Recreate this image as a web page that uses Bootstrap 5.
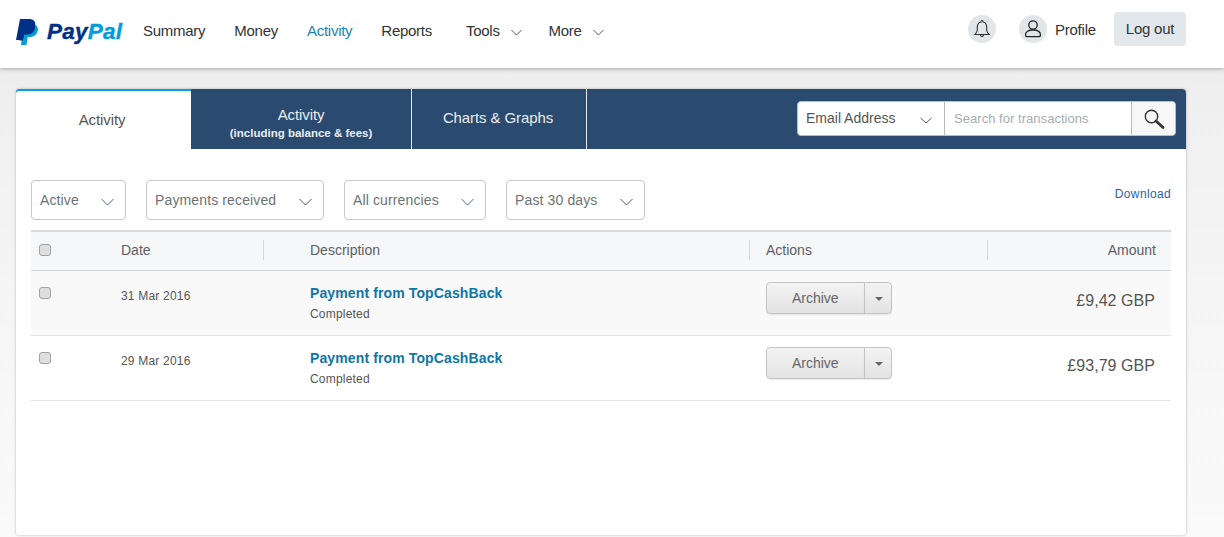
<!DOCTYPE html>
<html lang="en"><head><meta charset="utf-8"><title>PayPal Activity</title>
<link href="https://cdn.jsdelivr.net/npm/bootstrap@5.3.0/dist/css/bootstrap.min.css" rel="stylesheet">
<style>
html,body{height:537px;overflow:hidden}
body{font-family:"Liberation Sans",Arial,sans-serif;background:linear-gradient(#eeeeee 70px,#f3f3f3 200px,#fafafa 537px);color:#444}
.pp-head{height:68px;background:#fff;box-shadow:0 1px 4px rgba(0,0,0,.3);padding:0 38px 0 16px;position:relative}
.pp-logo{width:22px;height:26px;margin-top:-4px}
.pp-word{font-weight:700;font-style:italic;font-size:22.5px;letter-spacing:.25px;margin-left:9px;margin-top:-4px;color:#003087;width:76px;line-height:26px;-webkit-text-stroke:.4px currentColor}
.pp-word span{color:#009cde}
.pp-links{margin-left:20px;gap:29px;font-size:15px;letter-spacing:-.27px;margin-top:-6px}
.pp-links a{color:#333;text-decoration:none;line-height:20px}
.pp-links a.on{color:#1b87b8}
.pp-links a.pp-tools{margin-left:5px}
.pp-links a.pp-more{margin-left:-2px}
.pp-links svg{margin-left:7px}
.pp-circle{width:28px;height:28px;border-radius:50%;background:#e1e6ea}
.pp-right{font-size:15px;letter-spacing:-.2px;color:#333;margin-top:-10px}
.pp-gap{margin-right:23px}
.pp-prof{margin-top:2px}
.pp-logout{width:72px;height:34px;background:#e1e7eb;border-radius:4px;border:0;padding:0;font-size:15px;letter-spacing:-.25px;color:#333;margin-left:18px}
.pp-card{margin:21px 38px 0 16px;height:446px;background:#fff;border-radius:4px 4px 3px 3px;box-shadow:0 0 3px rgba(0,0,0,.28)}
.pp-tabs{height:60px;background:#2b4a6f;border-radius:4px 4px 0 0}
.pp-tab{color:#e8edf2;text-decoration:none;font-size:15px;letter-spacing:-.1px;height:60px;border-right:1px solid #e6e9ee;text-align:center;line-height:1.2}
.pp-tab small{display:block;font-size:11.5px;font-weight:700;letter-spacing:0;margin-top:3px}
.pp-tab.on{width:175px;background:#fff;color:#555;border-top:2px solid #0a9fe0;border-right:0;border-radius:4px 0 0 0;padding-right:3px}
.pp-w2{width:221px;padding-top:9px}.pp-w3{width:175px;padding:0 2px 2px 0}
.pp-search{margin-left:auto;margin-right:10px;width:379px;height:35px;margin-top:-1px;background:#fff;border:1px solid #bbb;border-radius:4px;font-size:14px}
.pp-sel{width:147px;padding-left:8px;color:#555;border-right:1px solid #bbb;padding-right:12px}
.pp-inp{flex:1;min-width:0;border:0;padding:0 9px;font-size:13.1px;outline:0;background:transparent;color:#555;border-right:1px solid #bbb;height:100%}
.pp-inp::placeholder{color:#a8adb2;opacity:1}
.pp-glass{width:43px;height:100%;border:0;background:#f8f8f8;padding:0;border-radius:0 4px 4px 0}
.pp-panel{padding:31px 15px 0}
.pp-filters{gap:20px;height:40px;margin-bottom:10px}
.pp-fil{height:40px;border:1px solid #c9c9c9;border-radius:4px;background:#fff;color:#6c7378;font-size:14px;letter-spacing:.13px;padding:0 11px 0 8px}
.pp-dl{margin-left:auto;font-size:12px;letter-spacing:.35px;color:#2b62a8;text-decoration:none;margin-top:-12px}
.pp-hrow{height:41px;padding-bottom:3px;background:#f6f7f9;border-top:2px solid #dcdcdc;border-bottom:1px solid #cfd6db;font-size:14px;line-height:20px;color:#5c6166}
.pp-row{height:65px;border-bottom:1px solid #e4e4e4;padding-top:11px}
.pp-row.alt{background:#f9f9f9}
.c1{width:90px;padding-left:8px;flex:none}.c2{width:143px;flex:none}.c3{width:486px;flex:none;padding-left:46px}.c4{width:238px;flex:none;padding-left:16px}.c5{flex:1;text-align:right}
.pp-hrow .c2,.pp-hrow .c3,.pp-hrow .c4{height:20px;line-height:20px;border-right:1px solid #d5d8da}
.pp-hrow .c5{padding-right:15px}
.pp-chk.form-check-input{width:12px;height:12px;margin:0;background-color:#dedede;border:1px solid #a3a3a3;border-radius:3px;display:block}
.pp-row .pp-chk{margin-top:5px}
.pp-date{font-size:12px;letter-spacing:.2px;color:#555;padding-top:5px}
.pp-name{font-size:14px;font-weight:700;letter-spacing:.12px;color:#0f76a8;text-decoration:none;line-height:20px;display:block;margin-top:1px}
.pp-st{font-size:12px;letter-spacing:.2px;color:#555;line-height:20px;margin-top:1px}
.pp-split{width:126px;height:32px}
.pp-split .btn{height:32px;border:1px solid #c4c4c4;background:linear-gradient(#f3f3f3,#e3e3e3);color:#666;font-size:14px;padding:0;box-shadow:0 1px 1px rgba(0,0,0,.08)}
.pp-arch{width:98px;border-radius:4px 0 0 4px}
.pp-car{width:28px;margin-left:-1px!important;border-radius:0 4px 4px 0}
.pp-split .pp-car{padding-left:2px}
.pp-tri{display:inline-block;border:4px solid transparent;border-top-color:#666;border-bottom:0;vertical-align:middle}
.pp-amt{font-size:16px;color:#555;padding-right:16px;padding-top:7px;letter-spacing:.05px}
</style></head>
<body>
<header class="pp-head d-flex align-items-center">
  <svg class="pp-logo" viewBox="0 0 22 26" aria-label="PayPal logo">
    <path fill="#009cde" d="M8 5.500h8.500c3.600 0 6 2.200 5.300 6-.8 4.300-4 6.500-7.800 6.500h-2.300l-1.300 8H5z"/>
    <path fill="#012169" d="M5.700 6h9.500c1.500 0 3 .5 4 1.500-.5 5-3.500 8-8 8H8.200l-1.400 6H3.500z"/>
    <path fill="#003087" d="M4 0h9c4.300 0 7 2.600 6.200 7-.9 5-4.600 8.200-9 8.200H7.800L6.500 21H0z"/>
  </svg>
  <div class="pp-word">Pay<span>Pal</span></div>
  <nav class="pp-links d-flex align-items-center">
    <a href="#">Summary</a><a href="#">Money</a><a href="#" class="on">Activity</a><a href="#">Reports</a>
    <a href="#" class="pp-tools">Tools <svg width="11" height="7" viewBox="0 0 11 7"><path d="M.5 1l5 5 5-5" fill="none" stroke="#555"/></svg></a>
    <a href="#" class="pp-more">More <svg width="11" height="7" viewBox="0 0 11 7"><path d="M.5 1l5 5 5-5" fill="none" stroke="#555"/></svg></a>
  </nav>
  <div class="pp-right ms-auto d-flex align-items-center">
    <span class="pp-circle pp-gap d-flex align-items-center justify-content-center">
      <svg width="18" height="20" viewBox="0 0 18 20"><path d="M9 1.500c-.6 0-1 .4-1 1v.5C5.500 3.600 4.300 5.500 4.300 8v3c0 2-1.300 3.500-2.300 4.500h14c-1-1-2.300-2.500-2.300-4.500V8c0-2.500-1.200-4.400-3.700-5v-.5c0-.6-.4-1-1-1zM7.500 15.800c0 1 .7 1.700 1.500 1.700s1.500-.7 1.500-1.700" fill="none" stroke="#333" stroke-width="1.100"/></svg>
    </span>
    <span class="pp-circle d-flex align-items-center justify-content-center ms-0 me-2">
      <svg width="20" height="20" viewBox="0 0 20 20"><circle cx="10" cy="6" r="4.200" fill="none" stroke="#222" stroke-width="1.300"/><path d="M2.500 16c0-3.200 3-5 7.500-5s7.500 1.800 7.500 5c0 1-.7 1.700-2 1.700h-11c-1.300 0-2-.7-2-1.700z" fill="none" stroke="#222" stroke-width="1.300"/></svg>
    </span>
    <span class="pp-prof">Profile</span>
    <button class="pp-logout" type="button">Log out</button>
  </div>
</header>
<main class="pp-card">
  <div class="pp-tabs d-flex align-items-center">
    <a href="#" class="pp-tab on d-flex align-items-center justify-content-center">Activity</a>
    <a href="#" class="pp-tab pp-w2 d-flex flex-column align-items-center justify-content-center">Activity<small>(including balance &amp; fees)</small></a>
    <a href="#" class="pp-tab pp-w3 d-flex align-items-center justify-content-center">Charts &amp; Graphs</a>
    <form class="pp-search d-flex align-items-center" onsubmit="return false">
      <div class="pp-sel d-flex align-items-center justify-content-between h-100">Email Address <svg width="12" height="7" viewBox="0 0 12 7" class="mt-1"><path d="M.5 1l5.500 5 5.500-5" fill="none" stroke="#555"/></svg></div>
      <input class="pp-inp" placeholder="Search for transactions" aria-label="Search">
      <button class="pp-glass" type="button" aria-label="Search"><svg width="22" height="22" viewBox="0 0 22 22"><circle cx="8.500" cy="8.500" r="6.200" fill="none" stroke="#333" stroke-width="1.400"/><path d="M13 13l7 6.500" stroke="#333" stroke-width="2.800" stroke-linecap="round"/></svg></button>
    </form>
  </div>
  <div class="pp-panel">
    <div class="pp-filters d-flex align-items-center">
      <button class="pp-fil btn d-flex align-items-center justify-content-between" style="width:95px" type="button">Active <svg width="13" height="8" viewBox="0 0 13 8" class="mt-1"><path d="M.5 1l6 6 6-6" fill="none" stroke="#4a6a90"/></svg></button>
      <button class="pp-fil btn d-flex align-items-center justify-content-between" style="width:178px" type="button">Payments received <svg width="13" height="8" viewBox="0 0 13 8" class="mt-1"><path d="M.5 1l6 6 6-6" fill="none" stroke="#555"/></svg></button>
      <button class="pp-fil btn d-flex align-items-center justify-content-between" style="width:142px" type="button">All currencies <svg width="13" height="8" viewBox="0 0 13 8" class="mt-1"><path d="M.5 1l6 6 6-6" fill="none" stroke="#4a6a90"/></svg></button>
      <button class="pp-fil btn d-flex align-items-center justify-content-between" style="width:139px" type="button">Past 30 days <svg width="13" height="8" viewBox="0 0 13 8" class="mt-1"><path d="M.5 1l6 6 6-6" fill="none" stroke="#555"/></svg></button>
      <a href="#" class="pp-dl">Download</a>
    </div>
    <div class="pp-hrow d-flex align-items-center">
      <div class="c1"><input class="pp-chk form-check-input" type="checkbox" aria-label="Select all"></div>
      <div class="c2">Date</div><div class="c3">Description</div><div class="c4">Actions</div><div class="c5">Amount</div>
    </div>
    <div class="pp-row alt d-flex">
      <div class="c1"><input class="pp-chk form-check-input" type="checkbox" aria-label="Select"></div>
      <div class="c2 pp-date">31 Mar 2016</div>
      <div class="c3"><a href="#" class="pp-name">Payment from TopCashBack</a><div class="pp-st">Completed</div></div>
      <div class="c4"><div class="pp-split btn-group"><button class="btn pp-arch" type="button">Archive</button><button class="btn pp-car" type="button" aria-label="More"><span class="pp-tri"></span></button></div></div>
      <div class="c5 pp-amt">£9,42 GBP</div>
    </div>
    <div class="pp-row d-flex">
      <div class="c1"><input class="pp-chk form-check-input" type="checkbox" aria-label="Select"></div>
      <div class="c2 pp-date">29 Mar 2016</div>
      <div class="c3"><a href="#" class="pp-name">Payment from TopCashBack</a><div class="pp-st">Completed</div></div>
      <div class="c4"><div class="pp-split btn-group"><button class="btn pp-arch" type="button">Archive</button><button class="btn pp-car" type="button" aria-label="More"><span class="pp-tri"></span></button></div></div>
      <div class="c5 pp-amt">£93,79 GBP</div>
    </div>
  </div>
</main>
<script src="https://cdn.jsdelivr.net/npm/bootstrap@5.3.0/dist/js/bootstrap.bundle.min.js"></script>
</body></html>
